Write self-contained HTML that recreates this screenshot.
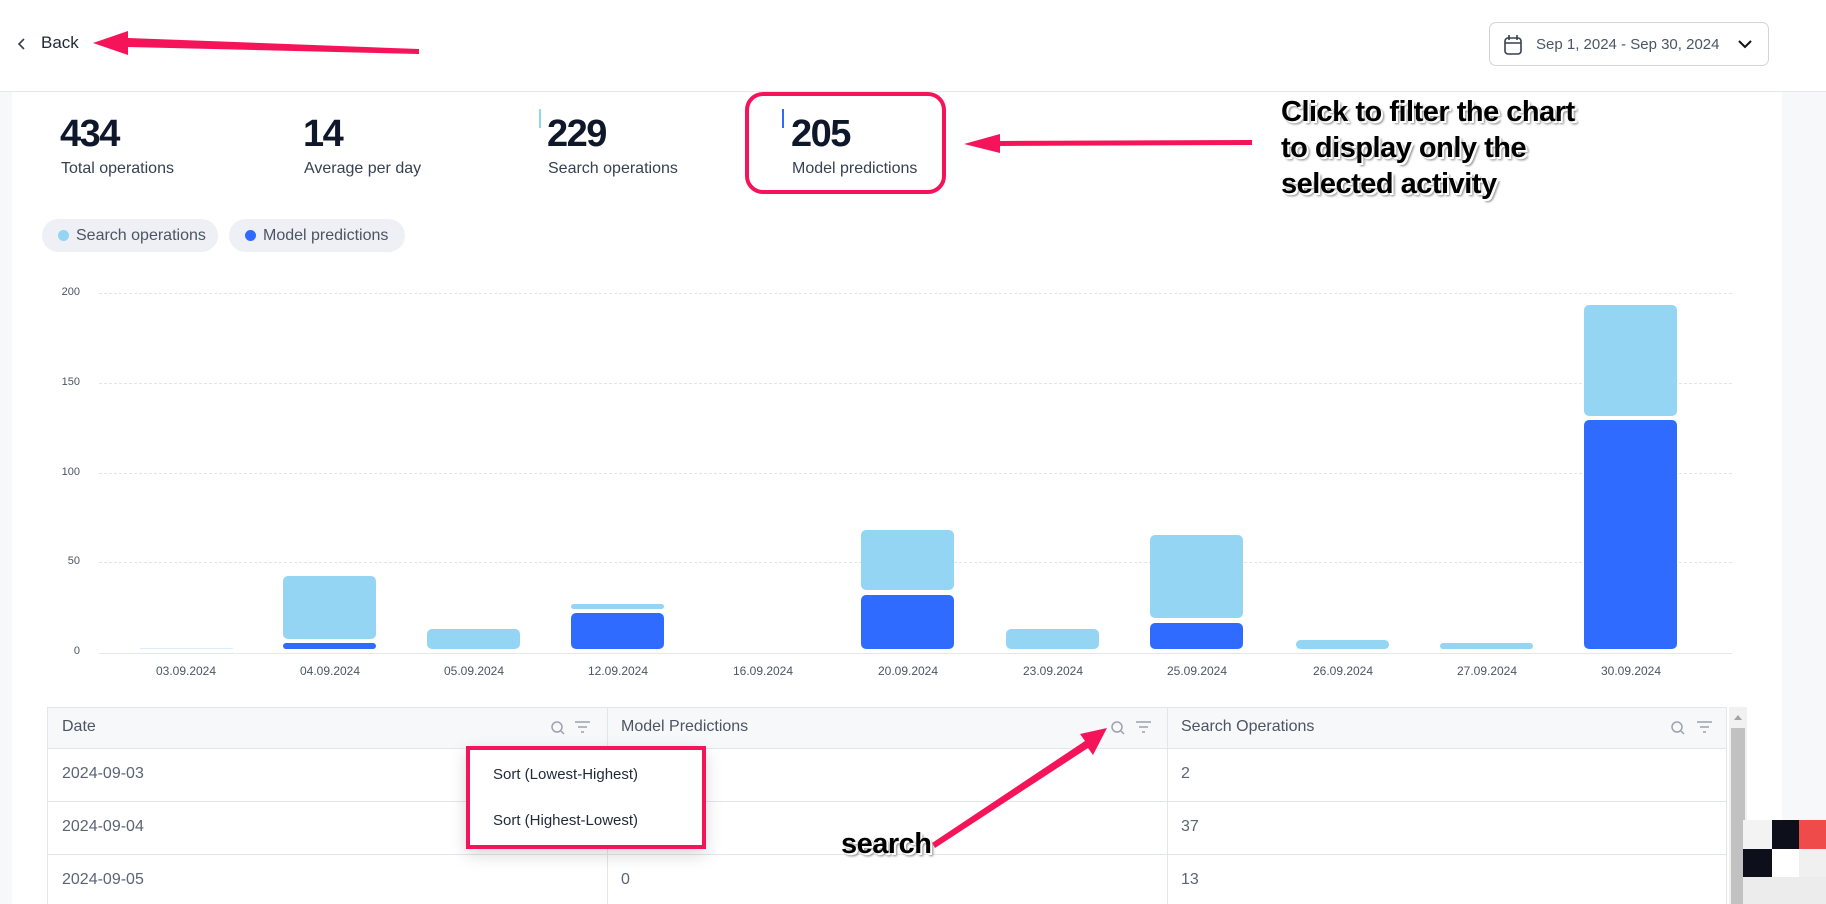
<!DOCTYPE html>
<html><head><meta charset="utf-8"><style>
*{margin:0;padding:0;box-sizing:border-box}
body{width:1826px;height:904px;overflow:hidden;background:#fff;font-family:"Liberation Sans",sans-serif;position:relative;color:#111827}
.abs{position:absolute}
.num{position:absolute;font-size:38px;font-weight:600;color:#0f172a;letter-spacing:-1.5px;top:113px}
.lab{position:absolute;font-size:16px;color:#374151;top:160px}
.ann{position:absolute;font-weight:bold;font-size:29px;color:#000;text-shadow:2px 2px 0 #fff,3px 3px 2px #888,-1px -1px 0 #fff;line-height:36px;letter-spacing:-0.5px}
.yl{position:absolute;left:50px;width:30px;text-align:right;font-size:11px;color:#4b5563}
.grid{position:absolute;left:99px;width:1633px;border-top:1px dashed #e2e5ea}
.xl{position:absolute;top:664px;font-size:12px;color:#4b5563;width:100px;text-align:center}
.bar{position:absolute;width:93px;border-radius:5px}
.lt{background:#93d5f3}.dk{background:#2f6bff}
.cell{position:absolute;font-size:16px;color:#5b6475}
.hd{position:absolute;font-size:16px;color:#4b5563;top:718px}
</style></head><body>
<!-- header -->
<div class="abs" style="left:0;top:91px;width:1826px;border-top:1px solid #e5e7eb"></div>
<div class="abs" style="left:0;top:92px;width:12px;height:812px;background:#f7f8fa"></div>
<div class="abs" style="left:1782px;top:92px;width:44px;height:812px;background:#f7f8fa"></div>
<svg class="abs" style="left:16px;top:37px" width="12" height="14"><path d="M8 2 L3 7 L8 12" stroke="#374151" stroke-width="1.6" fill="none"/></svg>
<div class="abs" style="left:41px;top:33px;font-size:17px;color:#1f2937">Back</div>
<div class="abs" style="left:1489px;top:22px;width:280px;height:44px;border:1px solid #d1d5db;border-radius:7px"></div>
<svg class="abs" style="left:1503px;top:34px" width="20" height="22"><rect x="2" y="4" width="16" height="16" rx="3" stroke="#374151" stroke-width="1.6" fill="none"/><path d="M2 9H18M6 1V6M14 1V6" stroke="#374151" stroke-width="1.6"/></svg>
<div class="abs" style="left:1536px;top:36px;font-size:15px;color:#4b5563">Sep 1, 2024 - Sep 30, 2024</div>
<svg class="abs" style="left:1737px;top:38px" width="16" height="12"><path d="M2 3 L8 9 L14 3" stroke="#111" stroke-width="2" fill="none"/></svg>
<!-- stats -->
<div class="num" style="left:60px">434</div><div class="lab" style="left:61px">Total operations</div>
<div class="num" style="left:303px">14</div><div class="lab" style="left:304px">Average per day</div>
<div class="abs" style="left:539px;top:109px;width:2px;height:19px;background:#93d5f3"></div>
<div class="num" style="left:547px">229</div><div class="lab" style="left:548px">Search operations</div>
<div class="abs" style="left:782px;top:109px;width:2px;height:19px;background:#2f6bff"></div>
<div class="num" style="left:791px">205</div><div class="lab" style="left:792px">Model predictions</div>
<div class="abs" style="left:745px;top:92px;width:201px;height:102px;border:4px solid #f5135a;border-radius:18px"></div>
<div class="ann" style="left:1281px;top:94px">Click to filter the chart<br>to display only the<br>selected activity</div>
<!-- legend -->
<div class="abs" style="left:42px;top:219px;width:176px;height:33px;border-radius:17px;background:#eef0f5"></div>
<div class="abs" style="left:58px;top:230px;width:11px;height:11px;border-radius:50%;background:#93d5f3"></div>
<div class="abs" style="left:76px;top:227px;font-size:16px;color:#4b5563">Search operations</div>
<div class="abs" style="left:229px;top:219px;width:176px;height:33px;border-radius:17px;background:#eef0f5"></div>
<div class="abs" style="left:245px;top:230px;width:11px;height:11px;border-radius:50%;background:#2f6bff"></div>
<div class="abs" style="left:263px;top:227px;font-size:16px;color:#4b5563">Model predictions</div>
<!-- chart -->
<div class="grid" style="top:293px"></div><div class="grid" style="top:383px"></div><div class="grid" style="top:473px"></div><div class="grid" style="top:562px"></div>
<div class="abs" style="left:99px;top:653px;width:1633px;border-top:1px solid #e5e7eb"></div>
<div class="yl" style="top:286px">200</div><div class="yl" style="top:376px">150</div><div class="yl" style="top:466px">100</div><div class="yl" style="top:555px">50</div><div class="yl" style="top:645px">0</div>
<div class="xl" style="left:136px">03.09.2024</div><div class="xl" style="left:280px">04.09.2024</div><div class="xl" style="left:424px">05.09.2024</div><div class="xl" style="left:568px">12.09.2024</div><div class="xl" style="left:713px">16.09.2024</div><div class="xl" style="left:858px">20.09.2024</div><div class="xl" style="left:1003px">23.09.2024</div><div class="xl" style="left:1147px">25.09.2024</div><div class="xl" style="left:1293px">26.09.2024</div><div class="xl" style="left:1437px">27.09.2024</div><div class="xl" style="left:1581px">30.09.2024</div>
<div class="bar lt" style="left:140px;top:648px;height:1px;opacity:.4"></div>
<div class="bar lt" style="left:283px;top:576px;height:63px"></div><div class="bar dk" style="left:283px;top:643px;height:6px"></div>
<div class="bar lt" style="left:427px;top:629px;height:20px"></div>
<div class="bar lt" style="left:571px;top:604px;height:5px"></div><div class="bar dk" style="left:571px;top:613px;height:36px"></div>
<div class="bar lt" style="left:861px;top:530px;height:60px"></div><div class="bar dk" style="left:861px;top:595px;height:54px"></div>
<div class="bar lt" style="left:1006px;top:629px;height:20px"></div>
<div class="bar lt" style="left:1150px;top:535px;height:83px"></div><div class="bar dk" style="left:1150px;top:623px;height:26px"></div>
<div class="bar lt" style="left:1296px;top:640px;height:9px"></div>
<div class="bar lt" style="left:1440px;top:643px;height:6px"></div>
<div class="bar lt" style="left:1584px;top:305px;height:111px"></div><div class="bar dk" style="left:1584px;top:420px;height:229px"></div>
<!-- table -->
<div class="abs" style="left:47px;top:707px;width:1680px;height:41px;background:#f7f8fa"></div>
<div class="abs" style="left:47px;top:707px;width:1680px;height:197px;border:1px solid #e2e5ea;border-bottom:none"></div>
<div class="abs" style="left:607px;top:707px;height:197px;border-left:1px solid #e2e5ea"></div>
<div class="abs" style="left:1167px;top:707px;height:197px;border-left:1px solid #e2e5ea"></div>
<div class="abs" style="left:47px;top:748px;width:1680px;border-top:1px solid #e2e5ea"></div>
<div class="abs" style="left:47px;top:801px;width:1680px;border-top:1px solid #e2e5ea"></div>
<div class="abs" style="left:47px;top:854px;width:1680px;border-top:1px solid #e2e5ea"></div>
<div class="hd" style="left:62px">Date</div><div class="hd" style="left:621px">Model Predictions</div><div class="hd" style="left:1181px">Search Operations</div>
<svg class="abs" style="left:0;top:0" width="1826" height="904"><g stroke="#9ca3af" stroke-width="1.5" fill="none">
<circle cx="557" cy="727" r="5"/><path d="M561 731l3 3M575 722h15M578 727h9M581 732h3"/>
<circle cx="1117" cy="727" r="5"/><path d="M1121 731l3 3M1136 722h15M1139 727h9M1142 732h3"/>
<circle cx="1677" cy="727" r="5"/><path d="M1681 731l3 3M1697 722h15M1700 727h9M1703 732h3"/></g></svg>
<div class="cell" style="left:62px;top:765px">2024-09-03</div><div class="cell" style="left:1181px;top:765px">2</div>
<div class="cell" style="left:62px;top:818px">2024-09-04</div><div class="cell" style="left:1181px;top:818px">37</div>
<div class="cell" style="left:62px;top:871px">2024-09-05</div><div class="cell" style="left:621px;top:871px">0</div><div class="cell" style="left:1181px;top:871px">13</div>
<div class="abs" style="left:1729px;top:707px;width:18px;height:197px;background:#f1f1f1"></div>
<div class="abs" style="left:1731px;top:728px;width:14px;height:176px;background:#c1c1c1"></div>
<svg class="abs" style="left:1733px;top:713px" width="10" height="8"><path d="M1 7L5 2L9 7Z" fill="#a3a3a3"/></svg>
<!-- popup -->
<div class="abs" style="left:466px;top:746px;width:240px;height:103px;background:#fff;border:4px solid #f5135a;box-shadow:0 6px 16px rgba(0,0,0,.15)"></div>
<div class="abs" style="left:493px;top:766px;font-size:15px;color:#1f2937">Sort (Lowest-Highest)</div>
<div class="abs" style="left:493px;top:812px;font-size:15px;color:#1f2937">Sort (Highest-Lowest)</div>
<svg class="abs" style="left:0;top:0" width="1826" height="904">
<polygon points="1252,140 1000,141 1000,134 964,144 1000,153 1000,146 1252,145" fill="#f5135a"/>
<polygon points="419,49 128,38 128,31 93,43 128,55 128,47 419,54" fill="#f5135a"/>
<polygon points="935,848 1088,748 1093,755 1107,728 1080,734 1085,741 932,843" fill="#f5135a"/>
</svg>
<div class="ann" style="left:841px;top:826px">search</div>
<!-- corner blocks -->
<div class="abs" style="left:1743px;top:820px;width:83px;height:84px;background:#ececec"></div>
<div class="abs" style="left:1743px;top:820px;width:29px;height:29px;background:#f3f3f3"></div>
<div class="abs" style="left:1772px;top:820px;width:27px;height:29px;background:#0d0f1a"></div>
<div class="abs" style="left:1799px;top:820px;width:27px;height:29px;background:#f04b4b"></div>
<div class="abs" style="left:1743px;top:849px;width:29px;height:28px;background:#0d0f1a"></div>
<div class="abs" style="left:1772px;top:849px;width:27px;height:28px;background:#fff"></div>
<div class="abs" style="left:1799px;top:849px;width:27px;height:28px;background:#f0f0f0"></div>
</body></html>
